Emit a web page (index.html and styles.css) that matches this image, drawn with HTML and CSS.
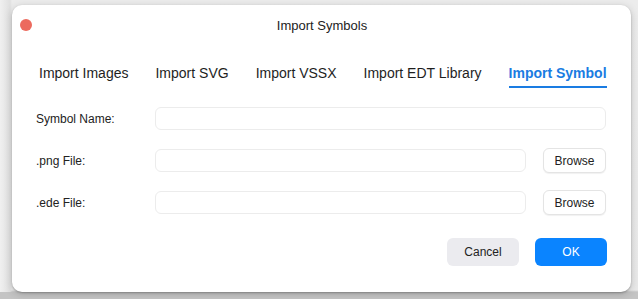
FILE: index.html
```html
<!DOCTYPE html>
<html>
<head>
<meta charset="utf-8">
<link rel="stylesheet" href="styles.css">
</head>
<body>
<div class="backdrop">
  <div class="dialog">
    <div class="titlebar">
      <span class="close"></span>
      <span class="title">Import Symbols</span>
    </div>
    <div class="tabs">
      <span class="tab">Import Images</span>
      <span class="tab">Import SVG</span>
      <span class="tab">Import VSSX</span>
      <span class="tab">Import EDT Library</span>
      <span class="tab active">Import Symbol</span>
    </div>
    <div class="form">
      <div class="row">
        <label class="label">Symbol Name:</label>
        <div class="input"></div>
      </div>
      <div class="row">
        <label class="label">.png File:</label>
        <div class="input"></div>
        <button class="browse">Browse</button>
      </div>
      <div class="row">
        <label class="label">.ede File:</label>
        <div class="input"></div>
        <button class="browse">Browse</button>
      </div>
    </div>
    <div class="actions">
      <button class="btn cancel">Cancel</button>
      <button class="btn ok">OK</button>
    </div>
  </div>
</div>
</body>
</html>
```

FILE: styles.css
```css
html, body {
  margin: 0;
  padding: 0;
  width: 638px;
  height: 299px;
  overflow: hidden;
}
body {
  background: linear-gradient(to bottom, #ececec 0px, #e9e9e9 290px, #c4c4c4 292px, #c4c4c4 299px);
  font-family: "Liberation Sans", Arial, sans-serif;
  color: #222;
}
.backdrop {
  padding: 5px 7px 0 12px;
  background: linear-gradient(to right, #f0f0f0 0px, #e0e0e0 10px, transparent 12px);
}
.dialog {
  width: 619px;
  height: 287px;
  box-sizing: border-box;
  background: #fff;
  border-radius: 10px;
  box-shadow: 0 1px 2px rgba(0,0,0,0.25), 0 2px 8px rgba(0,0,0,0.18);
  display: flex;
  flex-direction: column;
}
.titlebar {
  position: relative;
  height: 40px;
  display: flex;
  align-items: center;
  justify-content: center;
}
.close {
  position: absolute;
  left: 8px;
  top: 14px;
  width: 12px;
  height: 12px;
  border-radius: 50%;
  background: #ec6a5e;
}
.title {
  font-size: 13px;
  color: #222;
  margin-left: 1px;
}
.tabs {
  display: flex;
  gap: 27px;
  padding: 20px 0 0 27px;
  height: 29px;
  box-sizing: content-box;
}
.tab {
  font-size: 14px;
  line-height: 17px;
  color: #1e1e1e;
  height: 21px;
  border-bottom: 2px solid transparent;
}
.tab.active {
  color: #1a7ce2;
  font-weight: bold;
  border-bottom-color: #1a7ce2;
}
.form {
  display: flex;
  flex-direction: column;
  gap: 17px;
  padding: 12px 25px 0 24px;
}
.row {
  display: flex;
  align-items: center;
  height: 25px;
}
.label {
  width: 119px;
  font-size: 12px;
  color: #222;
}
.input {
  flex: 1;
  height: 23px;
  box-sizing: border-box;
  border: 1px solid #ececec;
  border-radius: 6px;
  background: #fff;
}
.browse {
  margin-left: 17px;
  width: 63px;
  height: 25px;
  box-sizing: border-box;
  border: 1px solid #e4e4e4;
  border-radius: 6px;
  background: #fff;
  box-shadow: 0 1px 1px rgba(0,0,0,0.06);
  font-family: inherit;
  font-size: 12px;
  color: #222;
  padding: 0;
}
.actions {
  display: flex;
  justify-content: flex-end;
  gap: 16px;
  padding: 23px 24px 0 0;
}
.btn {
  width: 72px;
  height: 28px;
  border: none;
  border-radius: 6px;
  font-family: inherit;
  font-size: 12px;
  padding: 0;
}
.cancel {
  background: #ebebef;
  color: #222;
}
.ok {
  background: #0a84ff;
  color: #fff;
}
```
